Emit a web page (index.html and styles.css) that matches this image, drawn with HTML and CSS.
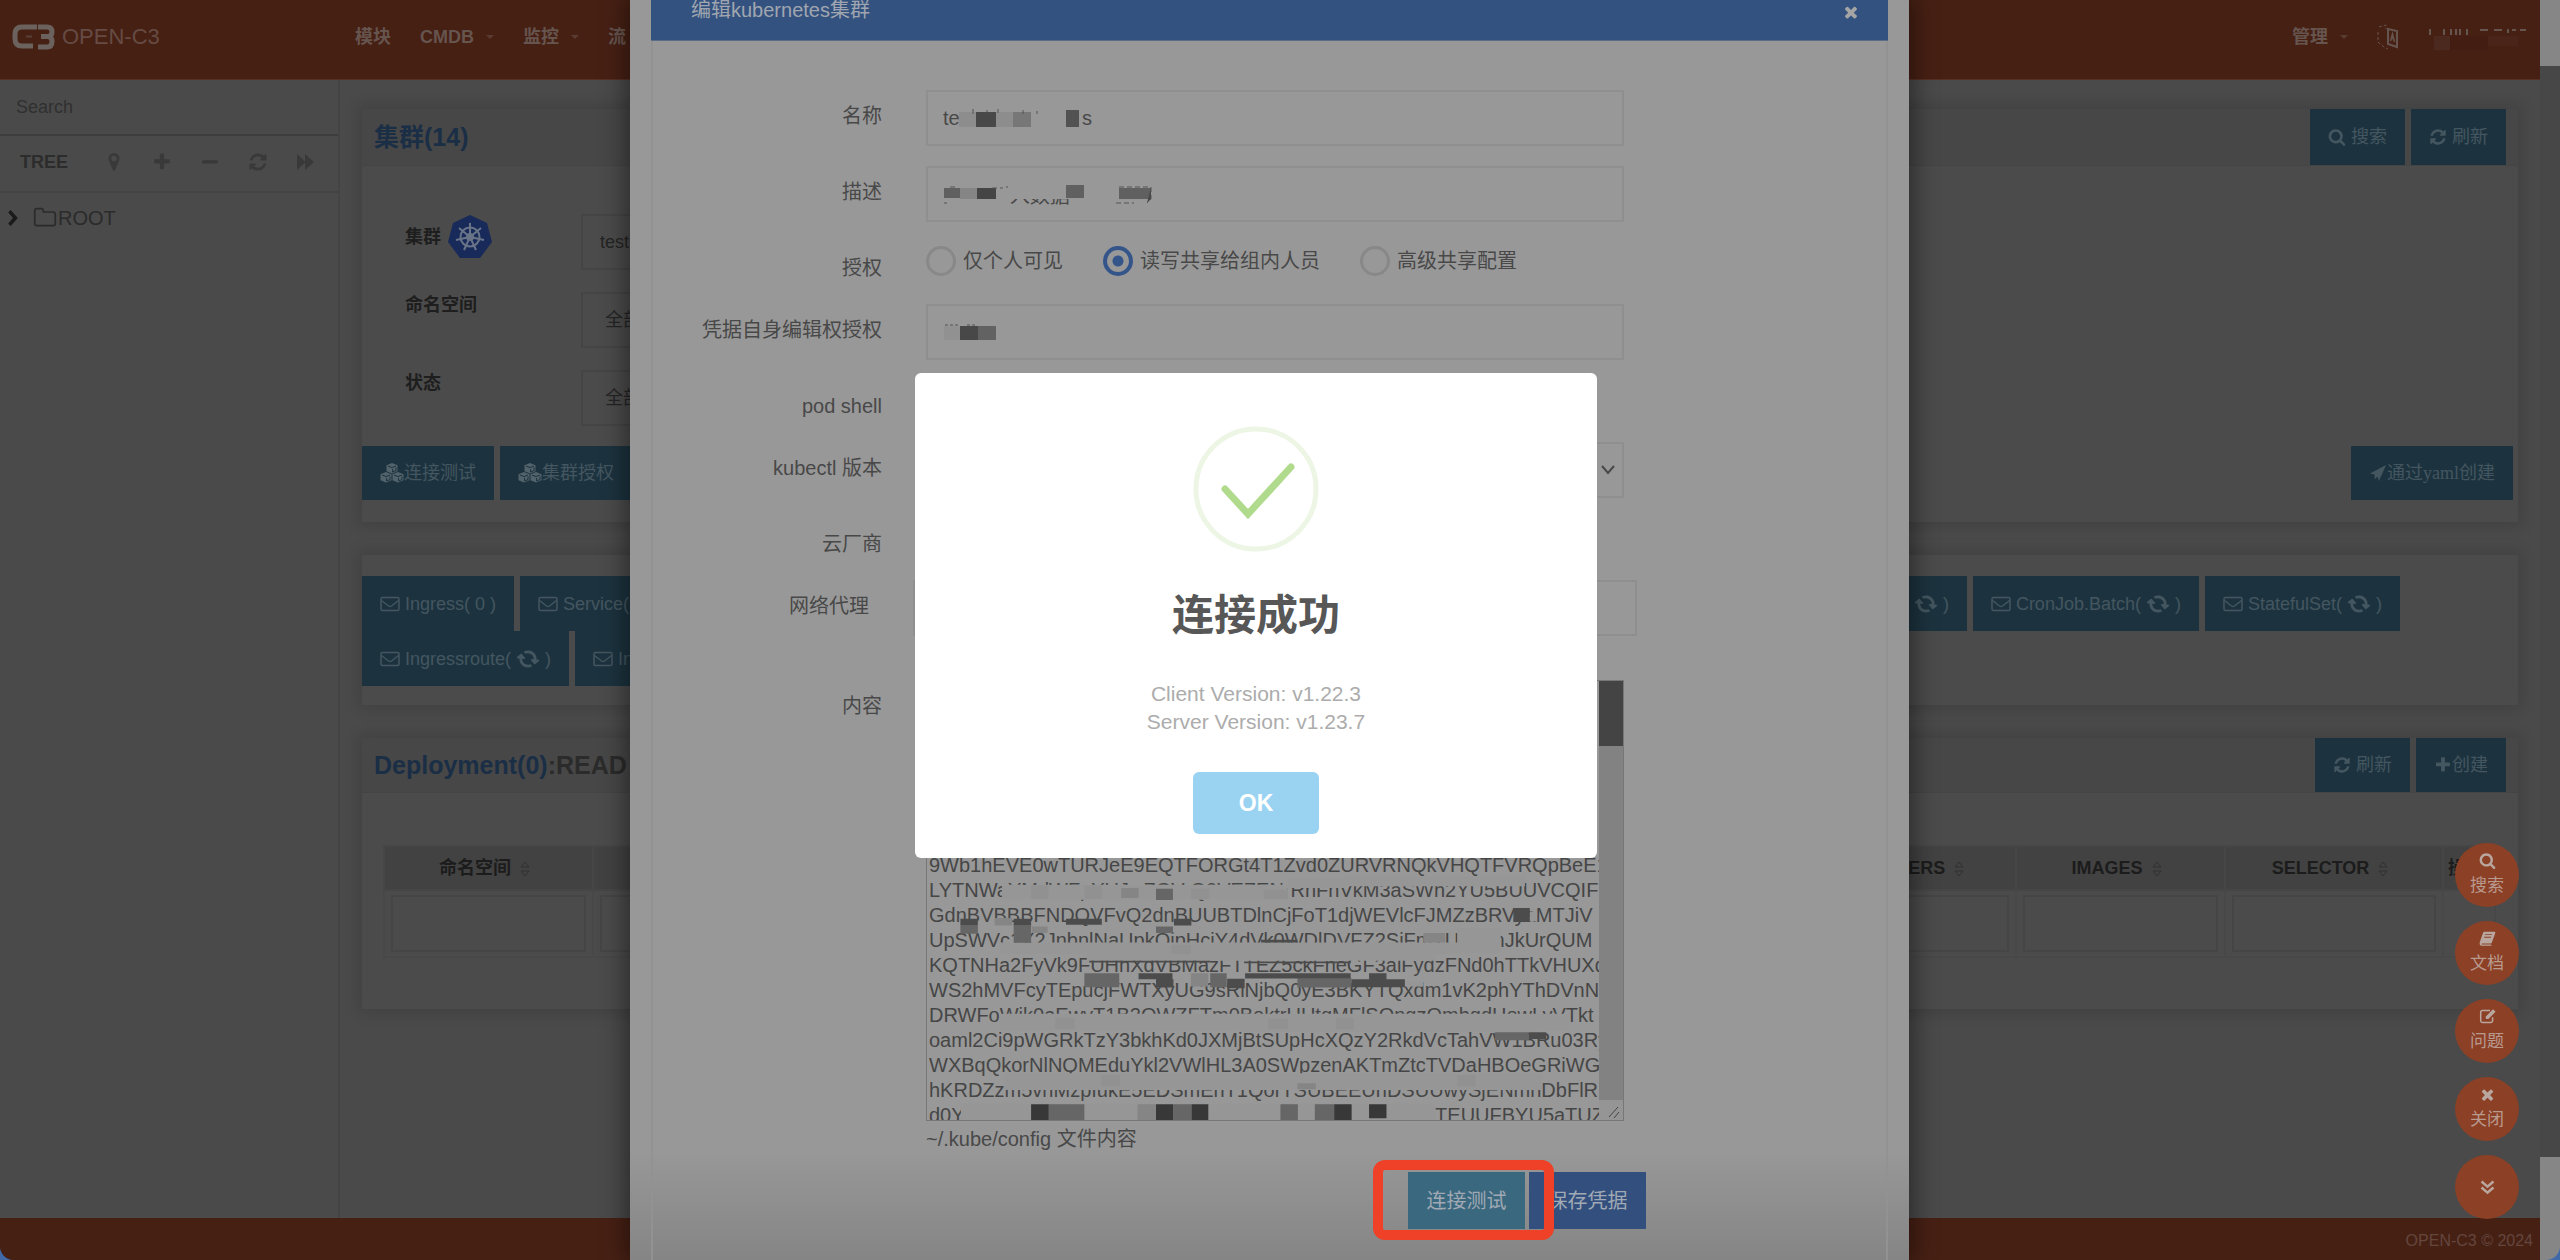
FILE: index.html
```html
<!DOCTYPE html>
<html lang="zh-CN">
<head>
<meta charset="utf-8">
<title>OPEN-C3</title>
<link rel="stylesheet" href="styles.css">
</head>
<body>
<svg class="defs" width="0" height="0" aria-hidden="true">
  <symbol id="refresh" viewBox="0 0 1792 1792"><path d="M1639 1056q0 5-1 7-64 268-268 434.500t-478 166.500q-146 0-282.500-55t-243.500-157l-129 129q-19 19-45 19t-45-19-19-45v-448q0-26 19-45t45-19h448q26 0 45 19t19 45-19 45l-137 137q71 66 161 102t187 36q134 0 250-65t186-179q11-17 53-117 8-23 30-23h192q13 0 22.500 9.500t9.500 22.500zm25-800v448q0 26-19 45t-45 19h-448q-26 0-45-19t-19-45 19-45l138-138q-148-137-349-137-134 0-250 65t-186 179q-11 17-53 117-8 23-30 23h-199q-13 0-22.500-9.500t-9.500-22.500v-7q65-268 270-434.500t480-166.500q146 0 284 55.500t245 156.500l130-129q19-19 45-19t45 19 19 45z"/></symbol>
  <symbol id="search" viewBox="0 0 1792 1792"><path d="M1216 832q0-185-131.500-316.500t-316.500-131.500-316.500 131.500-131.500 316.500 131.500 316.500 316.500 131.500 316.500-131.500 131.500-316.500zm512 832q0 52-38 90t-90 38q-54 0-90-38l-343-342q-179 124-399 124-143 0-273.500-55.500t-225-150-150-225-55.500-273.500 55.500-273.500 150-225 225-150 273.500-55.500 273.500 55.500 225 150 150 225 55.500 273.500q0 220-124 399l343 343q37 37 37 90z"/></symbol>
  <symbol id="plus" viewBox="0 0 1792 1792"><path d="M1600 736v192q0 40-28 68t-68 28h-416v416q0 40-28 68t-68 28h-192q-40 0-68-28t-28-68v-416h-416q-40 0-68-28t-28-68v-192q0-40 28-68t68-28h416v-416q0-40 28-68t68-28h192q40 0 68 28t28 68v416h416q40 0 68 28t28 68z"/></symbol>
  <symbol id="minus" viewBox="0 0 1792 1792"><rect x="192" y="736" width="1408" height="288" rx="96"/></symbol>
  <symbol id="times" viewBox="0 0 1792 1792"><path d="M1490 1322q0 40-28 68l-136 136q-28 28-68 28t-68-28l-294-294-294 294q-28 28-68 28t-68-28l-136-136q-28-28-28-68t28-68l294-294-294-294q-28-28-28-68t28-68l136-136q28-28 68-28t68 28l294 294 294-294q28-28 68-28t68 28l136 136q28 28 28 68t-28 68l-294 294 294 294q28 28 28 68z"/></symbol>
  <symbol id="folder" viewBox="0 0 1792 1792"><path d="M1600 1312v-704q0-40-28-68t-68-28h-704q-40 0-68-28t-28-68v-64q0-40-28-68t-68-28h-320q-40 0-68 28t-28 68v960q0 40 28 68t68 28h1216q40 0 68-28t28-68zm128-704v704q0 92-66 158t-158 66h-1216q-92 0-158-66t-66-158v-960q0-92 66-158t158-66h320q92 0 158 66t66 158v32h672q92 0 158 66t66 158z"/></symbol>
  <symbol id="marker" viewBox="0 0 20 20"><path fill-rule="evenodd" d="M10 1a5.500 5.500 0 0 1 5.500 5.500c0 2-.8 3-1.500 4.500L11.200 18q-1.200 2-2.400 0L6 11C5.300 9.500 4.500 8.500 4.500 6.500A5.500 5.500 0 0 1 10 1zm0 2.800a2.700 2.700 0 1 0 0 5.400 2.700 2.700 0 0 0 0-5.400z"/></symbol>
  <symbol id="forward" viewBox="0 0 20 20"><path d="M1 2l8 7.500V2l9 8-9 8v-7.500L1 18z"/></symbol>
  <symbol id="chevron" viewBox="0 0 20 20"><path d="M4 3l3-3 9 10-9 10-3-3 6-7z"/></symbol>
  <symbol id="mail" viewBox="0 0 20 20"><g fill="none" stroke="currentColor" stroke-width="1.500"><rect x="1" y="3.500" width="18" height="13" rx="1.500"/><path d="M1.500 6.500l7 5.500q1.500 1 3 0l7-5.500"/></g></symbol>
  <symbol id="cubes" viewBox="0 0 24 20"><path d="M12 0l5.500 2.200v6L12 10.500 6.500 8.200v-6zM6 9l5.500 2.200v6L6 19.500.5 17.200v-6zM18 9l5.500 2.200v6L18 19.500l-5.500-2.300v-6z"/><path d="M8 3l4 1.600L16 3M12.600 6v3l3.400-1.400V4.500M2 12l4 1.600L10 12M6.600 15v3l3.400-1.400v-3.100M14 12l4 1.600 4-1.600M18.600 15v3l3.400-1.400v-3.100" class="cut"/></symbol>
  <symbol id="arrow" viewBox="0 0 20 20"><path d="M19 1L11 19l-1.500-5-3 3-.5-5.500-5-1z"/></symbol>
  <symbol id="book" viewBox="0 0 20 20"><path d="M6 2h12q2 0 1 2l-4 11q-.5 1-2 1H4q-1.500 0-1 1h11l1 1.500H3Q0 18 1 14L4.500 4Q5 2 6 2zm1 3v1h8l.5-1zm-1 3v1h8l.5-1z" fill-rule="evenodd"/></symbol>
  <symbol id="edit" viewBox="0 0 20 20"><path d="M13 3H4Q2 3 2 5v10q0 2 2 2h10q2 0 2-2v-4" fill="none" stroke="currentColor" stroke-width="1.800"/><path d="M16.500 1.500l3 3L11 13H8v-3z"/></symbol>
  <symbol id="down" viewBox="0 0 20 20"><path d="M3 3l7 6 7-6M3 10l7 6 7-6" fill="none" stroke="currentColor" stroke-width="3"/></symbol>
  <symbol id="sort" viewBox="0 0 10 16"><path d="M5 1l4 5H1zM5 15l4-5H1z" fill="none" stroke="currentColor"/></symbol>
</svg>

<div class="app">
  <header class="topbar">
    <a class="brand" href="#">
      <svg class="line" width="43" height="26" viewBox="0 0 43 26" stroke="currentColor" stroke-width="5"><path d="M25 3H10Q3 3 3 10v5q0 7 7 7h11"/><path d="M14 12.500h6" stroke-width="2" opacity=".5"/><path d="M26 3h9q5 0 5 5 0 4-4 4.500 4 .5 4 5 0 5.500-5 5.500h-9M29 12.500h8"/></svg>
      <span>OPEN-C3</span>
    </a>
    <nav class="nav">
      <a href="#">模块</a>
      <a href="#">CMDB<i class="caret"></i></a>
      <a href="#">监控<i class="caret"></i></a>
      <a href="#">流</a>
    </nav>
    <nav class="nav nav-right">
      <a href="#">管理<i class="caret"></i></a>
      <a href="#" aria-label="语言"><svg class="line" width="24" height="26" viewBox="0 0 24 26" stroke="currentColor"><path d="M3 3l7-2v4M2 8v10l6 5 4 2" stroke-dasharray="3 2"/><path d="M12 5v15l9 3V7z" stroke-width="2"/><path d="M14.500 17l2-7 2 8M15 14.500h3" stroke-width="1.500"/></svg></a>
      <svg class="user" width="100" height="30" viewBox="0 0 100 30"><path d="M2 7v6M16 7v6M23 7v6M28 7v6M32 7v6M39 7v6M52 8h8M66 8h8M80 7v4M84 8h4M92 8h6" stroke="currentColor" stroke-width="2"/><path d="M6 14h16v14H6z" fill="#4c291f"/><path d="M22 14h38v14H22z" fill="#431c12"/><path d="M60 14h30v10H60z" fill="#4a2419"/></svg>
    </nav>
  </header>

  <div class="middle">
    <aside class="sidebar">
      <input class="side-search" type="text" placeholder="Search" aria-label="Search">
      <div class="tree-bar">
        <strong>TREE</strong>
        <button aria-label="定位"><svg class="ico"><use href="#marker"/></svg></button>
        <button aria-label="展开"><svg class="ico"><use href="#plus"/></svg></button>
        <button aria-label="收起"><svg class="ico"><use href="#minus"/></svg></button>
        <button aria-label="刷新"><svg class="ico"><use href="#refresh"/></svg></button>
        <button aria-label="隐藏"><svg class="ico"><use href="#forward"/></svg></button>
      </div>
      <a class="tree-root" href="#"><svg class="chev"><use href="#chevron"/></svg><svg class="fold"><use href="#folder"/></svg>ROOT</a>
    </aside>

    <main class="content">
      <section class="card">
        <div class="card-head">
          <h2><a href="#">集群(14)</a></h2>
          <div class="head-btns">
            <button class="btn tall"><svg class="ico small"><use href="#search"/></svg> 搜索</button>
            <button class="btn tall"><svg class="ico small"><use href="#refresh"/></svg> 刷新</button>
          </div>
        </div>
        <div class="filters">
          <div class="filter"><label for="cluster">集群
            <svg width="46" height="45" viewBox="0 0 46 45"><path d="M23 1l17 8 5 19-12 16H13L1 28 6 9z" fill="#172a5a"/><g fill="none" stroke="#6a7488" stroke-width="2"><circle cx="23" cy="23" r="9.500"/><circle cx="23" cy="23" r="3"/><path d="M23 23V9M23 23l11-9M23 23l14 3M23 23l6 13M23 23l-6 13M23 23L9 26M23 23l-11-9"/></g></svg></label>
            <select id="cluster"><option>test</option></select></div>
          <div class="filter"><label for="ns">命名空间</label><select id="ns" class="in"><option>全部</option></select></div>
          <div class="filter"><label for="state">状态</label><select id="state" class="in"><option>全部</option></select></div>
        </div>
        <div class="actions">
          <button class="btn"><svg class="cubes"><use href="#cubes"/></svg>连接测试</button>
          <button class="btn"><svg class="cubes"><use href="#cubes"/></svg>集群授权</button>
          <button class="btn serif push"><svg class="ico small"><use href="#arrow"/></svg>通过yaml创建</button>
        </div>
      </section>

      <section class="card kinds">
        <div class="kind-row">
          <button class="btn"><svg class="ico"><use href="#mail"/></svg> Ingress( 0 )</button>
          <button class="btn"><svg class="ico"><use href="#mail"/></svg> Service(</button>
          <button class="btn push"><svg class="ico spin"><use href="#refresh"/></svg> )</button>
          <button class="btn"><svg class="ico"><use href="#mail"/></svg> CronJob.Batch( <svg class="ico spin"><use href="#refresh"/></svg> )</button>
          <button class="btn"><svg class="ico"><use href="#mail"/></svg> StatefulSet( <svg class="ico spin"><use href="#refresh"/></svg> )</button>
        </div>
        <div class="kind-row">
          <button class="btn"><svg class="ico"><use href="#mail"/></svg> Ingressroute( <svg class="ico spin"><use href="#refresh"/></svg> )</button>
          <button class="btn"><svg class="ico"><use href="#mail"/></svg> In</button>
        </div>
      </section>

      <section class="card">
        <div class="card-head">
          <h2><a href="#">Deployment(0)</a>:READ</h2>
          <div class="head-btns">
            <button class="btn"><svg class="ico small"><use href="#refresh"/></svg> 刷新</button>
            <button class="btn"><svg class="ico small"><use href="#plus"/></svg>创建</button>
          </div>
        </div>
        <table class="grid">
          <colgroup><col class="c1"><col><col class="c3"><col class="c4"><col class="c5"><col class="c6"></colgroup>
          <thead><tr>
            <th>命名空间<svg class="sort"><use href="#sort"/></svg></th><th></th>
            <th>CONTAINERS<svg class="sort"><use href="#sort"/></svg></th>
            <th>IMAGES<svg class="sort"><use href="#sort"/></svg></th>
            <th>SELECTOR<svg class="sort"><use href="#sort"/></svg></th>
            <th class="tail">操作</th>
          </tr></thead>
          <tbody><tr>
            <td><input type="text" aria-label="命名空间"></td><td><input type="text" aria-label="名称"></td>
            <td><input type="text" aria-label="CONTAINERS"></td><td><input type="text" aria-label="IMAGES"></td>
            <td><input type="text" aria-label="SELECTOR"></td><td></td>
          </tr></tbody>
        </table>
      </section>
    </main>
  </div>
  <footer class="footer">OPEN-C3 © 2024</footer>
</div>
<div class="scrollbar"><div class="thumb"></div></div>

<div class="float">
  <button><svg><use href="#search"/></svg>搜索</button>
  <button><svg><use href="#book"/></svg>文档</button>
  <button><svg><use href="#edit"/></svg>问题</button>
  <button><svg><use href="#times"/></svg>关闭</button>
  <button aria-label="更多"><svg><use href="#down"/></svg></button>
</div>

<div class="modal">
  <div class="panel">
    <div class="panel-head"><h3>编辑kubernetes集群</h3><button aria-label="关闭"><svg><use href="#times"/></svg></button></div>
    <form class="form">
      <div class="row"><label for="name">名称</label>
        <div class="field"><input id="name" type="text" value="te&nbsp;&nbsp;&nbsp;&nbsp;&nbsp;&nbsp;&nbsp;&nbsp;&nbsp;&nbsp;&nbsp;&nbsp;&nbsp;&nbsp;&nbsp;&nbsp;&nbsp;&nbsp;&nbsp;&nbsp;&nbsp;&nbsp;s">
          <svg class="mask" width="400" height="56"><path d="M33 22h17v15H33zM70 22h18v15H70z" fill="#8d8d8d"/><path d="M50 22h20v15H50z" fill="#484848"/><path d="M87 22h18v15H87z" fill="#777"/><path d="M140 20h13v17h-13z" fill="#525252"/><path d="M47 19v5M61 20v3M72 19v4M97 20v4M111 21v3" stroke="#555"/></svg></div></div>
      <div class="row"><label for="desc">描述</label>
        <div class="field"><input id="desc" type="text" value="&nbsp;&nbsp;&nbsp;&nbsp;&nbsp;&nbsp;&nbsp;&nbsp;&nbsp;&nbsp;&nbsp;&nbsp;入数据">
          <svg class="mask" width="400" height="56"><path d="M80 12h100v21H80z" fill="#989898"/><path d="M18 22h16v10H18zM140 19h18v13h-18zM193 22h32v11h-32z" fill="#606060"/><path d="M34 22h17v11H34z" fill="#858585"/><path d="M51 22h19v11H51z" fill="#454545"/><path d="M66 22h11M80 21h2M24 21h8M193 21h30M225 21v12l-4 4M18 37h3M190 37h18" stroke="#555" stroke-dasharray="5 3"/></svg></div></div>
      <div class="row short"><span class="label">授权</span>
        <div class="field radios">
          <label><input type="radio" name="auth">仅个人可见</label>
          <label><input type="radio" name="auth" checked>读写共享给组内人员</label>
          <label><input type="radio" name="auth">高级共享配置</label>
        </div></div>
      <div class="row"><label for="owner">凭据自身编辑权授权</label>
        <div class="field"><input id="owner" type="text">
          <svg class="mask" width="400" height="56"><path d="M18 22h16v14H18z" fill="#919191"/><path d="M34 22h18v14H34z" fill="#484848"/><path d="M52 22h18v14H52z" fill="#626262"/><path d="M19 21h15M41 21h10" stroke="#555" stroke-dasharray="3 2"/></svg></div></div>
      <div class="row short"><span class="label">pod shell</span></div>
      <div class="row"><label for="ver">kubectl 版本</label>
        <div class="field select"><select id="ver"></select><svg class="line" width="16" height="12" viewBox="0 0 16 12"><path d="M2 2l6 7 6-7" stroke="#484848" stroke-width="2"/></svg></div></div>
      <div class="row short"><span class="label">云厂商</span></div>
      <div class="row wide"><label for="proxy">网络代理</label><div class="field"><input id="proxy" type="text"></div></div>
      <div class="row end"><label for="conf">内容</label>
        <div class="field">
          <div class="editor">
<textarea id="conf" wrap="off">9Wb1hEVE0wTURJeE9EQTFORGt4T1Zvd0ZURVRNQkVHQTFVRQpBeE1
LYTNWaYMdWFpYUJwZGVrQ0VEZENrRnFnVkM3aSWh2YU5BUUVCQIFBR
GdnBVBBBFNDQVFvQ2dnBUUBTDlnCjFoT1djWEVlcFJMZzBRVyaMTJiV
UpSWVc1X2JnbnlNaUpkQjpHcjY4dVk0WDlDVFZ2SjFmTUxWmJkUrQUM
KQTNHa2FyVk9FUHhXdVBMazFTTEZ5ckFneGF3alFydzFNd0hTTkVHUXd
WS2hMVFcyTEpucjFWTXyUG9sRlNjbQ0yE3BKYTQxdm1vK2phYThDVnN
DRWFoWjk0aEwyT1B2QWZFTm0BoktrUUtqMFlSQngzQmhqdHowLyVTkt
oaml2Ci9pWGRkTzY3bkhKd0JXMjBtSUpHcXQzY2RkdVcTahVW1BRu03Ry
WXBqQkorNlNQMEduYkl2VWlHL3A0SWpzenAKTmZtcTVDaHBOeGRiWG
hKRDZzm5vnMzpIukE5EDSmEnT1QorTSUBEEUnDSUUwySjENmnDbFlR
d0YATjQ2maMmYhbH2NlDk000Dk2TENmaaKjaaknDFGTEUUFBYU5aTUZid0</textarea>
            <svg class="mosaic" viewBox="55 30 1390 785" preserveAspectRatio="none">
              <g fill="#969696"><path d="M210 110h590v45H210zM800 90h120v30H800zM920 85h370v30H920zM205 283h950v35H205zM1150 240h90v75h-90zM385 310h720v28H385zM205 497h1175v50H205zM700 535h620v16H700zM215 675h1110v50H215zM125 765h980v55H125zM1300 190h15v30h-15zM1040 400h40v15h-40z"/></g>
              <g fill="#919191"><path d="M270 112h36v40h-36zM380 112h36v40h-36zM600 122h38v30h-38zM760 512h40v30h-40zM900 510h36v34h-36zM415 680h38v34h-38zM1150 680h38v34h-38zM750 125h50v28h-50zM320 510h40v32h-40zM560 290h40v28h-40z"/></g>
              <g fill="#858585"><path d="M195 210h36v22h-36zM272 235h32v20h-32zM600 375h36v40h-36zM456 120h36v30h-36zM490 768h38v50h-38zM1080 255h45v28h-45zM820 705h38v18h-38z"/></g>
              <g fill="#666"><path d="M528 122h35v34h-35zM124 232h36v25h-36zM234 232h36v52h-36zM305 768h75v48h-75zM785 768h36v48h-36zM856 768h40v48h-40zM380 375h72v42h-72zM640 375h34v42h-34zM820 390h112v28H820zM1228 552h70v24h-70zM528 235h35v20h-35zM565 768h38v48h-38z"/></g>
              <g fill="#4c4c4c"><path d="M124 212h36v20h-36zM234 212h36v20h-36zM342 212h74v18h-74zM565 212h36v20h-36zM1266 180h34v42h-34zM492 375h70v18h-70zM528 393h36v25h-36zM675 392h36v28h-36zM712 375h218v16H712zM932 393h110v24H932zM968 375h36v18h-36zM710 340h220v5H710zM390 338h250v5H390zM745 275h75v8h-75zM1298 552h36v20h-36z"/></g>
              <g fill="#383838"><path d="M270 768h36v48h-36zM528 768h36v48h-36zM602 768h34v48h-34zM896 768h36v48h-36zM968 768h36v42h-36z"/></g>
            </svg>
            <div class="bar"><div class="bar-thumb"></div><svg width="22" height="20"><path d="M10 17l9-10M15 18l5-6" stroke="#444"/></svg></div>
          </div>
          <p class="help">~/.kube/config 文件内容</p>
        </div></div>
      <div class="submit">
        <div class="marked"><button type="button" class="test">连接测试</button></div>
        <button type="button" class="save">保存凭据</button>
      </div>
    </form>
  </div>
</div>

<div class="alert" role="dialog" aria-labelledby="done">
  <svg class="line" width="126" height="126" viewBox="0 0 126 126"><circle cx="63" cy="63" r="60" stroke="#edf6e5" stroke-width="5"/><path d="M32 63l23 25 43-47" stroke="#b0db8c" stroke-width="7" stroke-linecap="round"/></svg>
  <h1 id="done">连接成功</h1>
  <p>Client Version: v1.22.3<br>Server Version: v1.23.7</p>
  <button>OK</button>
</div>
</body>
</html>
```
FILE: styles.css
```css
* { box-sizing: border-box; }
body {
  margin: 0;
  height: 100vh;
  overflow: hidden;
  position: relative;
  display: flex;
  background: #3f69a8;
  color: #242424;
  font: 18px/26px "Liberation Sans", "Noto Sans CJK SC", sans-serif;
}
h1, h2, h3, p { margin: 0; }
a { color: inherit; text-decoration: none; }
button, input, select, textarea { font: inherit; color: inherit; margin: 0; border: 0; padding: 0; background: none; border-radius: 0; appearance: none; }
svg { fill: currentColor; flex: none; }
.line { fill: none; }
.defs { position: absolute; }
.cut { fill: none; stroke: #1c333f; stroke-width: 1; }

.app { flex: 1; display: flex; flex-direction: column; background: #4a4a4a; border-bottom-left-radius: 14px; overflow: hidden; }
.scrollbar { width: 20px; background: #868686; padding: 66px 0 103px; border-bottom-right-radius: 14px; }
.thumb { height: 100%; background: #474747; }

.topbar { height: 80px; flex: none; display: flex; align-items: center; background: #472014; color: #66544e; border-bottom: 1px solid #573023; padding: 0 0 6px 12px; }
.brand { width: 343px; display: flex; align-items: center; gap: 7px; font-size: 22px; color: #654b43; }
.brand svg { color: #6b625e; }
.nav { display: flex; align-items: center; gap: 29px; font-weight: bold; }
.nav a { display: flex; align-items: center; }
.nav-right { margin-left: auto; padding-right: 12px; gap: 28px; }
.caret { margin-left: 12px; border: 4px solid transparent; border-top-color: #5a3b31; border-bottom: 0; }

.middle { flex: 1; display: flex; }
.sidebar { width: 340px; flex: none; border-right: 2px solid #444; color: #333; }
.side-search { display: block; width: 100%; height: 56px; padding: 0 16px; border-bottom: 2px solid #3d3d3d; }
.side-search::placeholder { color: #303030; opacity: 1; }
.tree-bar { height: 57px; display: flex; align-items: center; gap: 28px; padding: 0 20px 4px; border-bottom: 2px solid #434343; }
.tree-bar strong { color: #2c2c2c; width: 56px; }
.tree-bar button { display: flex; color: #393939; }
.ico { width: 20px; height: 20px; vertical-align: -4px; }
.small { width: 18px; height: 18px; vertical-align: -3px; }
.tree-root { display: flex; align-items: center; margin-top: 12px; padding-left: 5px; font-size: 20px; color: #2b2b2b; }
.chev { width: 16px; height: 18px; margin-right: 12px; color: #1a1a1a; }
.fold { width: 24px; height: 24px; margin-right: 1px; }

.content { flex: 1; min-width: 0; padding: 29px 22px 0; display: flex; flex-direction: column; gap: 33px; }
.card { background: #4b4b4b; box-shadow: 0 0 14px 4px rgba(0, 0, 0, .12); padding-bottom: 22px; }
.card-head { display: flex; justify-content: space-between; align-items: center; background: #474747; border-bottom: 1px solid #444; padding: 0 12px; }
.card-head h2 { font-size: 25px; line-height: 32px; color: #2b2b2b; }
.card-head h2 a { color: #1a2e46; }
.head-btns { display: flex; gap: 6px; }
.btn { height: 54px; padding: 0 18px; background: #1c333f; color: #44565f; white-space: pre; font-size: 18px; }
.tall { height: 56px; }
.push { margin-left: auto; }
.serif { font-family: "Liberation Serif", "Noto Sans CJK SC", serif; }
.cubes { width: 24px; height: 20px; vertical-align: -4px; color: #53636b; }
.filters { padding: 48px 43px 20px; display: flex; flex-direction: column; gap: 22px; }
.filter { display: flex; align-items: flex-start; }
.filter label { width: 176px; display: flex; align-items: center; gap: 6px; font-weight: bold; color: #1e1e1e; }
.filter select { width: 600px; height: 56px; padding-left: 17px; border: 2px solid #454545; }
.filter .in { padding-left: 22px; }
.actions { display: flex; gap: 6px; padding-right: 5px; }
.kinds { padding: 21px 118px 19px 0; }
.kind-row { display: flex; gap: 6px; height: 55px; }
.kind-row .btn { height: 55px; }
.spin { transform: rotate(50deg); margin: 0 2px; }

.grid { width: calc(100% - 43px); margin: 52px 21px 29px; table-layout: fixed; border-collapse: collapse; }
.c1 { width: 209px; } .c3 { width: 232px; } .c4 { width: 209px; } .c5 { width: 218px; } .c6 { width: 52px; }
.grid th { height: 44px; padding: 0 8px 0 0; background: #424242; color: #1c1c1c; border: 2px solid #464646; white-space: nowrap; }
.grid .tail { padding: 0; text-align: left; text-indent: 4px; overflow: hidden; }
.grid td { height: 67px; padding: 4px 6px; border: 2px solid #484848; }
.grid input { display: block; width: 100%; height: 57px; border: 2px solid #454545; }
.sort { width: 10px; height: 16px; margin-left: 9px; vertical-align: -3px; color: #303030; }

.footer { height: 42px; background: #472014; color: #63463d; font-size: 16px; line-height: 46px; text-align: right; padding-right: 7px; }

.float { position: absolute; right: 41px; bottom: 41px; display: flex; flex-direction: column; gap: 14px; }
.float button { width: 64px; height: 64px; border-radius: 50%; background: #8c4026; color: #b99a8f; display: flex; flex-direction: column; align-items: center; justify-content: center; font-size: 17px; line-height: 26px; gap: 4px; }
.float svg { width: 17px; height: 17px; color: #b9a69e; }

.modal { position: absolute; top: 0; bottom: 0; left: 630px; right: 651px; overflow: hidden; padding: 0 21px; background: linear-gradient(#989898 1150px, #858585); box-shadow: 0 0 24px 4px rgba(0, 0, 0, .45); color: #484848; font-size: 20px; }
.panel { border: 2px solid #929292; border-width: 0 2px; min-height: 100%; }
.panel-head { height: 41px; margin: 0 -2px; background: #34527f; border-bottom: 1px solid #5b6c87; color: #a0a6b0; display: flex; justify-content: space-between; align-items: flex-start; padding: 0 28px 0 40px; }
.panel-head h3 { font-size: 20px; line-height: 20px; font-weight: normal; }
.panel-head svg { display: block; width: 18px; height: 18px; margin-top: 3px; color: #a5a5a5; }
.form { padding-top: 49px; }
.row { display: grid; grid-template-columns: 229fr 698fr 262fr; column-gap: 44px; margin-right: -44px; margin-bottom: 20px; min-height: 56px; }
.row.short { min-height: 42px; }
.row > label, .row > .label { padding-top: 10px; line-height: 32px; text-align: right; }
.field { position: relative; }
.field input[type=text], .field select { display: block; width: 100%; height: 56px; padding: 0 15px; border: 2px solid #8f8f8f; }
.mask { position: absolute; left: 0; top: 0; }
.radios { display: flex; align-items: center; height: 38px; gap: 40px; }
.radios label { display: flex; align-items: center; gap: 7px; }
.radios input { width: 30px; height: 30px; border: 3px solid #888; border-radius: 50%; }
.radios input:checked { border: 4px solid #34558a; background: radial-gradient(#34558a 5px, transparent 6px); }
.select svg { position: absolute; right: 8px; top: 22px; }
.wide { margin-bottom: 44px; }
.wide > label { padding-right: 13px; }
.wide .field { margin: 0 -13px; }
.end { margin-bottom: 0; }
.editor { position: relative; display: flex; height: 441px; border: 1px solid #777; }
.editor textarea { flex: 1; min-width: 0; padding: 172px 0 0 2px; line-height: 25px; overflow: hidden; resize: none; color: #464646; white-space: pre; }
.mosaic { position: absolute; left: 0; bottom: 0; width: 673px; height: 262px; }
.bar { width: 24px; display: flex; flex-direction: column; justify-content: space-between; background: #828282; }
.bar-thumb { height: 65px; background: #444; }
.bar svg { background: #959595; width: 24px; }
.help { line-height: 36px; }
.submit { display: flex; justify-content: flex-end; gap: 4px; padding: 15px 240px 0 0; color: #a0a9b4; }
.submit button { height: 57px; width: 117px; white-space: nowrap; }
.test { background: #3a687f; }
.save { background: #324f7e; }
.marked { position: relative; }
.marked::after { content: ""; position: absolute; inset: -12px -29px -11px -35px; border: 10px solid #ee4127; border-radius: 12px; pointer-events: none; }

.alert { position: absolute; left: 50%; top: 373px; width: 682px; margin-left: -365px; padding: 53px 20px 24px; background: #fff; border-radius: 6px; display: flex; flex-direction: column; align-items: center; text-align: center; }
.alert h1 { font-size: 42px; line-height: 56px; font-weight: 600; color: #575757; margin: 36px 0; }
.alert p { font-size: 21px; line-height: 28px; color: #acacac; }
.alert button { width: 126px; height: 62px; margin-top: 36px; border-radius: 6px; background: #9ad3f2; color: #fff; font-size: 23px; font-weight: bold; }
```
